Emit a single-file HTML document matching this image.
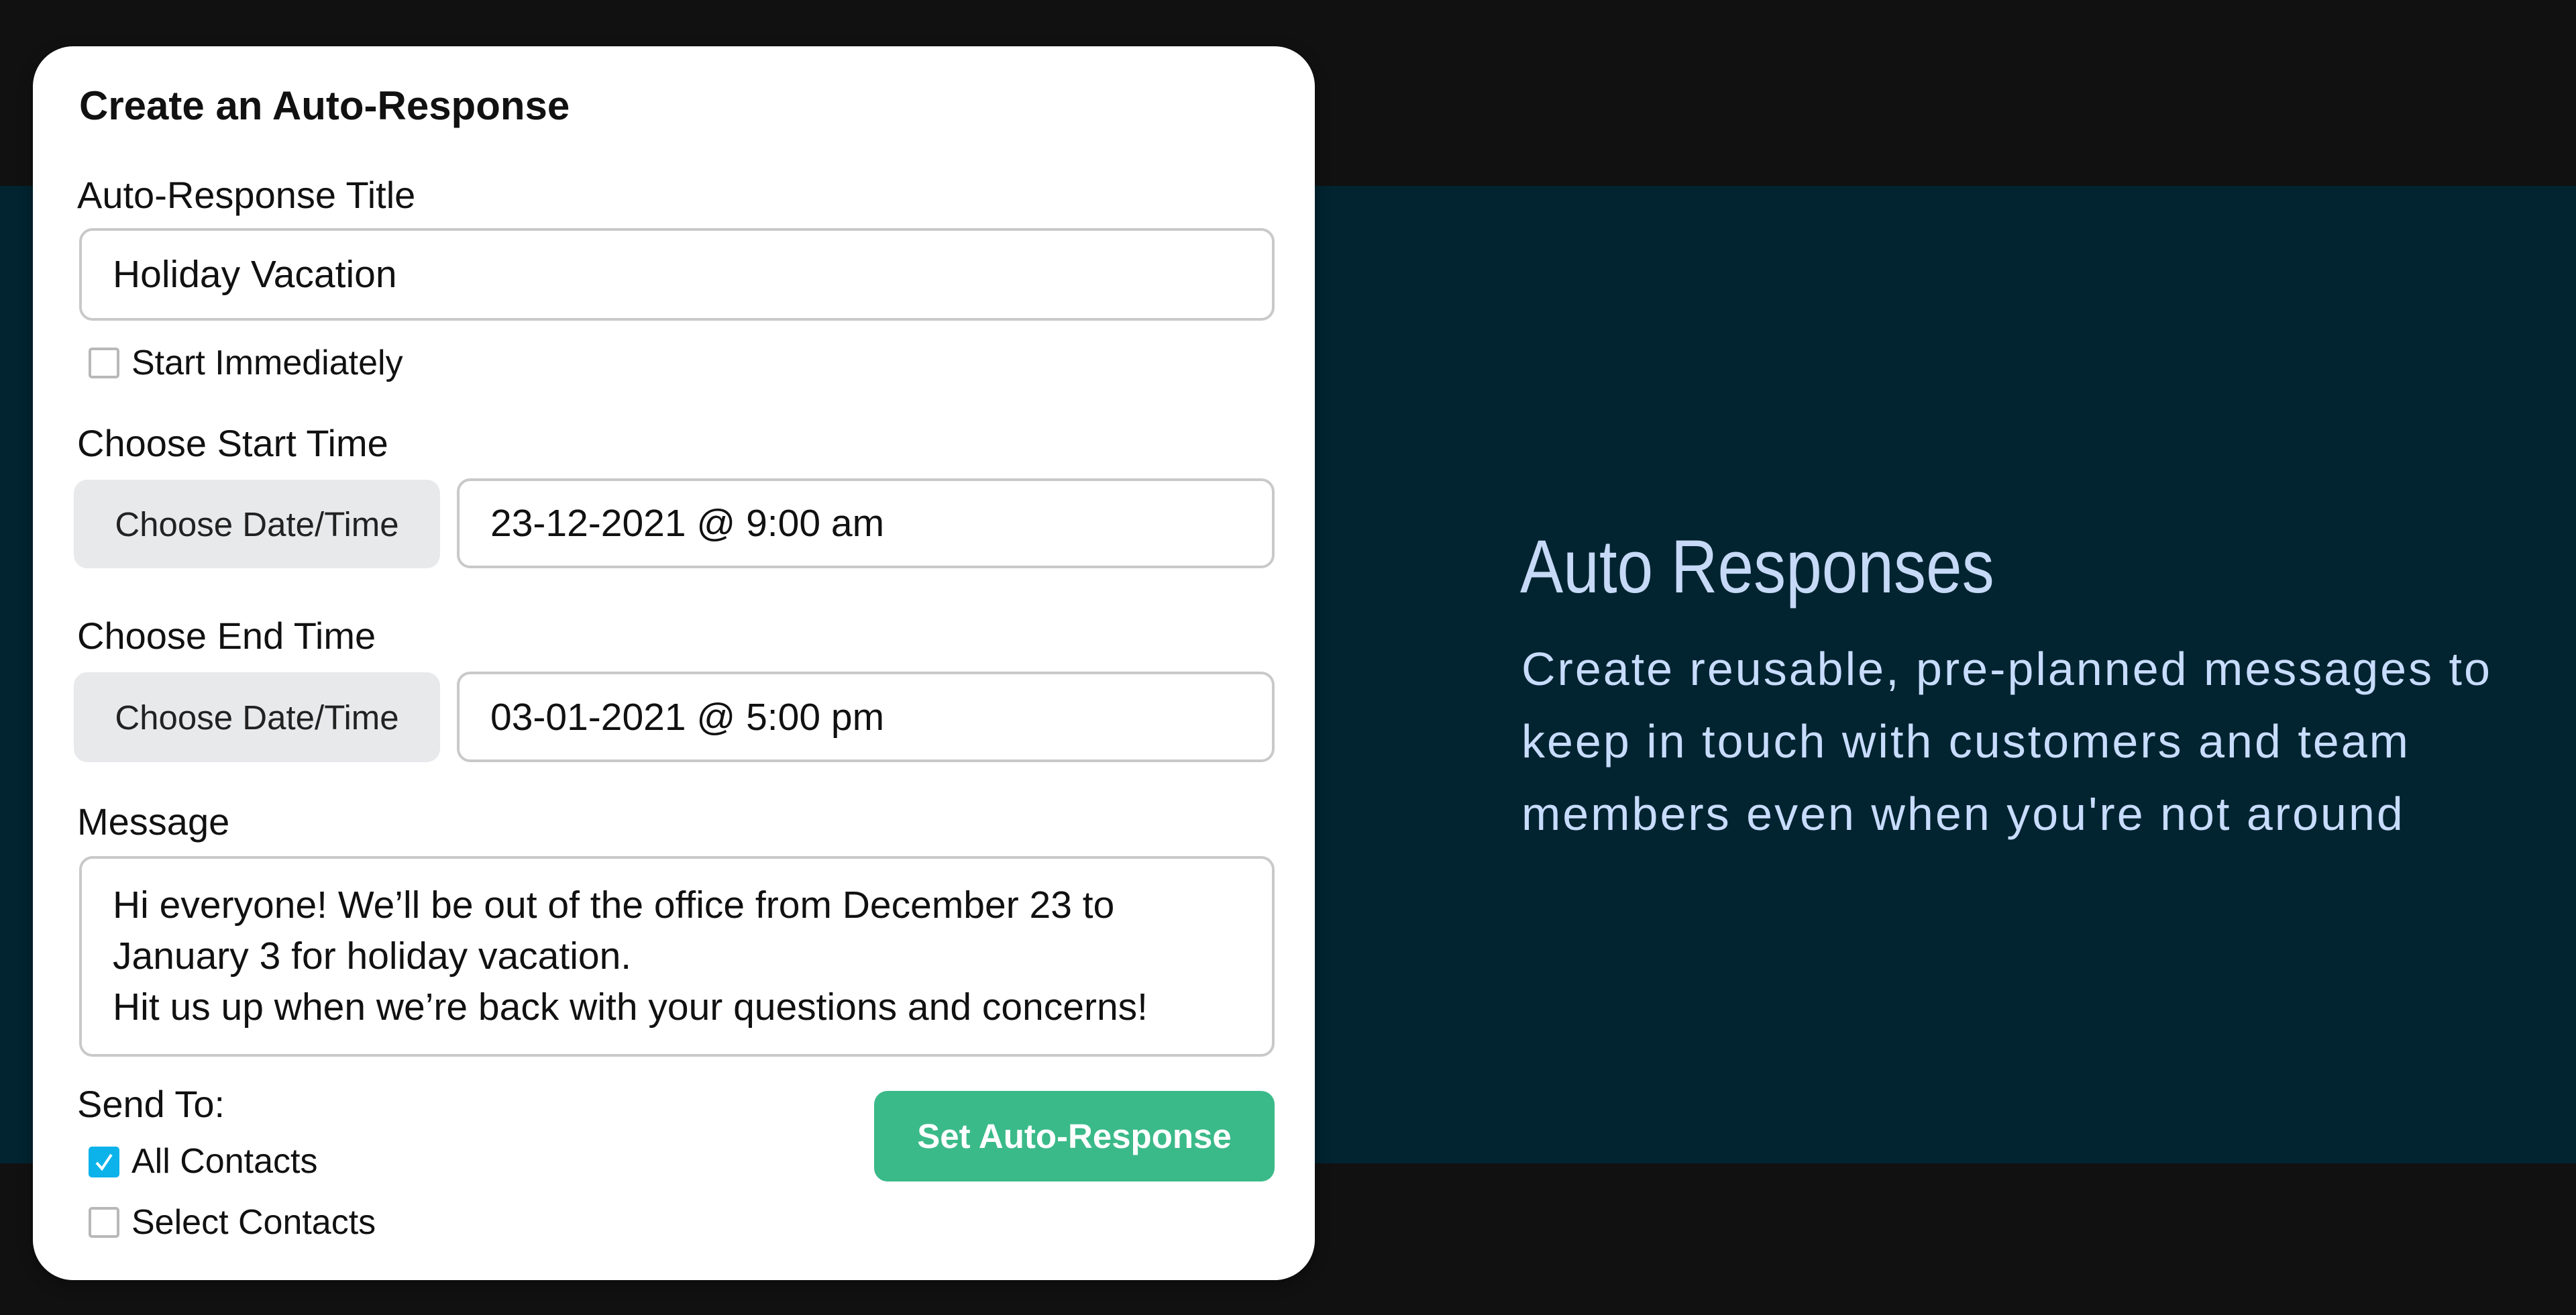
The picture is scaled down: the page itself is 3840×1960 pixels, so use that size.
<!DOCTYPE html>
<html><head><meta charset="utf-8"><style>
*{margin:0;padding:0;box-sizing:border-box}
html,body{width:3840px;height:1960px;overflow:hidden;background:#111111;font-family:"Liberation Sans",sans-serif;color:#111}
.abs{position:absolute}
#teal{left:0;top:277px;width:3840px;height:1457px;background:#012430}
#card{left:49px;top:69px;width:1911px;height:1839px;background:#fff;border-radius:60px;box-shadow:0 6px 20px rgba(0,0,0,.35)}
.lbl{font-size:56px;line-height:60px;color:#111;white-space:nowrap}
.inp{border:4px solid #c9c9c9;border-radius:20px;background:#fff;font-size:57px;display:flex;align-items:center;padding-left:46px;white-space:nowrap}
.btn{background:#e8e9eb;border-radius:20px;font-size:51px;display:flex;align-items:center;justify-content:center;color:#222}
.cb{width:46px;height:46px;border:4px solid #b8b8b8;border-radius:5px;background:#fff}
.small{font-size:52px;line-height:56px;white-space:nowrap}
</style></head><body>
<div id="teal" class="abs"></div>
<div id="card" class="abs"></div>

<div class="abs" style="left:118px;top:126px;font-size:60px;font-weight:bold;line-height:64px">Create an Auto-Response</div>

<div class="abs lbl" style="left:115px;top:261px">Auto-Response Title</div>
<div class="abs inp" style="left:118px;top:340px;width:1782px;height:138px">Holiday Vacation</div>

<div class="abs cb" style="left:132px;top:518px"></div>
<div class="abs small" style="left:196px;top:513px">Start Immediately</div>

<div class="abs lbl" style="left:115px;top:631px">Choose Start Time</div>
<div class="abs btn" style="left:110px;top:715px;width:546px;height:132px">Choose Date/Time</div>
<div class="abs inp" style="left:681px;top:713px;width:1219px;height:134px">23-12-2021 @ 9:00 am</div>

<div class="abs lbl" style="left:115px;top:918px">Choose End Time</div>
<div class="abs btn" style="left:110px;top:1002px;width:546px;height:134px">Choose Date/Time</div>
<div class="abs inp" style="left:681px;top:1001px;width:1219px;height:135px">03-01-2021 @ 5:00 pm</div>

<div class="abs lbl" style="left:115px;top:1195px">Message</div>
<div class="abs inp" style="left:118px;top:1276px;width:1782px;height:299px;display:block;padding-top:31px;font-size:57px;line-height:76px">Hi everyone! We’ll be out of the office from December 23 to<br>January 3 for holiday vacation.<br>Hit us up when we’re back with your questions and concerns!</div>

<div class="abs lbl" style="left:115px;top:1616px">Send To:</div>
<div class="abs" style="left:132px;top:1709px;width:46px;height:46px;background:#0bb3ea;border-radius:5px">
<svg width="46" height="46" viewBox="0 0 46 46"><path d="M12 24 L20 33 L34 12" fill="none" stroke="#fff" stroke-width="4"/></svg></div>
<div class="abs small" style="left:196px;top:1703px">All Contacts</div>
<div class="abs cb" style="left:132px;top:1799px"></div>
<div class="abs small" style="left:196px;top:1794px">Select Contacts</div>

<div class="abs" style="left:1303px;top:1626px;width:597px;height:135px;background:#3bba89;border-radius:20px;color:#fff;font-weight:bold;font-size:51px;display:flex;align-items:center;justify-content:center">Set Auto-Response</div>

<div class="abs" style="left:2266px;top:780px;font-family:'Liberation Sans Narrow','Liberation Sans',sans-serif;font-size:112px;line-height:130px;color:#c6d9f6;white-space:nowrap;transform:scaleX(0.86);transform-origin:left">Auto Responses</div>
<div class="abs" style="left:2268px;top:943px;font-size:70px;letter-spacing:3px;line-height:108px;color:#c8dcff;white-space:nowrap">Create reusable, pre-planned messages to<br>keep in touch with customers and team<br>members even when you're not around</div>
</body></html>
